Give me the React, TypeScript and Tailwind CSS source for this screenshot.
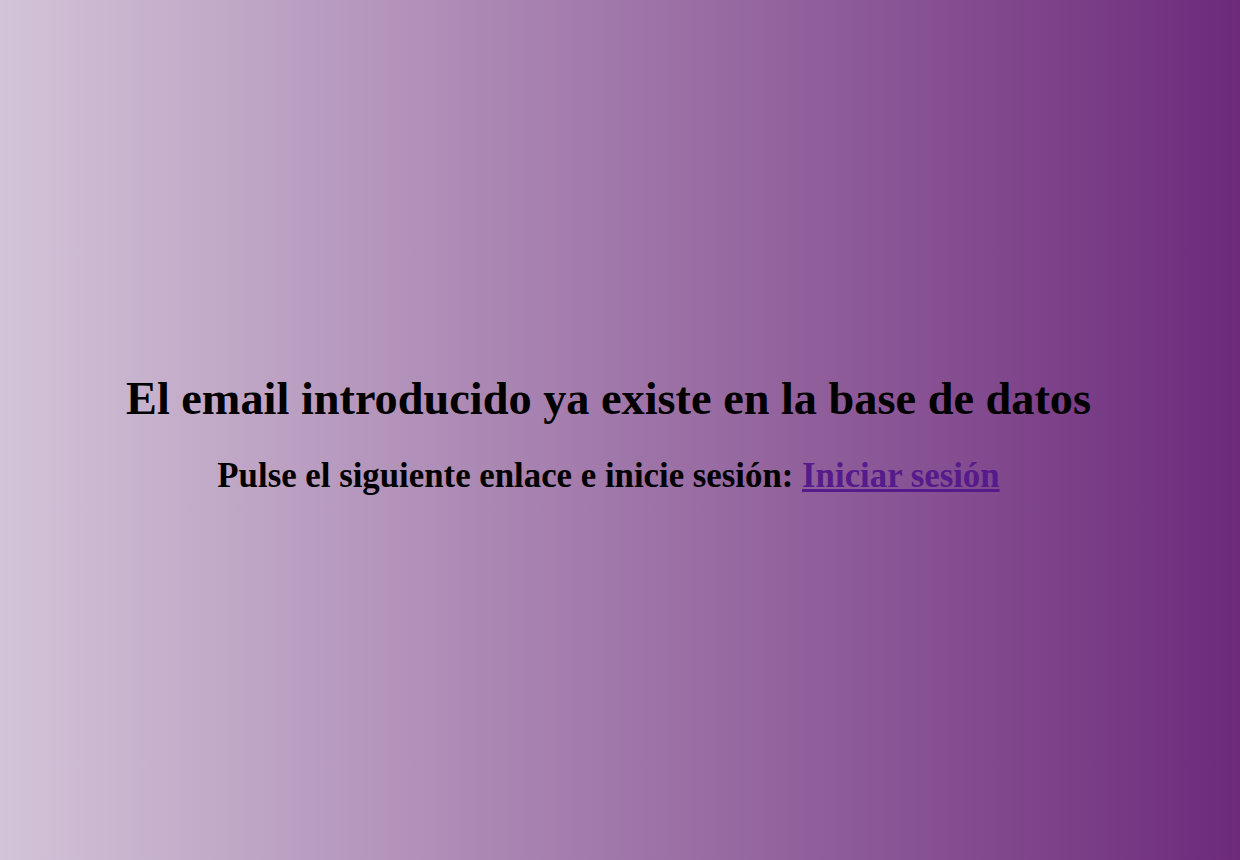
export default function App() {
  return (
    <div
      className="w-full h-[860px] flex flex-col items-center pt-[371px] pr-[23px] bg-[linear-gradient(to_right,#d3c4d8,#6d2a7b)]"
      style={{ fontFamily: '"Liberation Serif", "Times New Roman", serif' }}
    >
      <h1 className="text-[46.3px] leading-[56px] font-bold text-black m-0 whitespace-nowrap">
        El email introducido ya existe en la base de datos
      </h1>
      <h2 className="text-[34.8px] leading-[44px] font-bold text-black mt-[27px] whitespace-nowrap">
        Pulse el siguiente enlace e inicie sesión:{" "}
        <a href="#" className="text-[#551a8b] underline">
          Iniciar sesión
        </a>
      </h2>
    </div>
  );
}
